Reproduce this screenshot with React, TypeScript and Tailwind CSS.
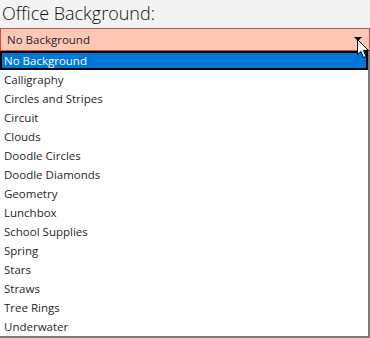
import { useState } from 'react';

const options = [
  'No Background',
  'Calligraphy',
  'Circles and Stripes',
  'Circuit',
  'Clouds',
  'Doodle Circles',
  'Doodle Diamonds',
  'Geometry',
  'Lunchbox',
  'School Supplies',
  'Spring',
  'Stars',
  'Straws',
  'Tree Rings',
  'Underwater',
];

export default function App() {
  const [selected, setSelected] = useState(0);

  return (
    <div className="relative w-[370px] h-[338px] overflow-hidden bg-[#f3f3f3] font-['Segoe_UI','Open_Sans',sans-serif] text-[#1f1f1f]">
      <div className="h-[28px] pl-[2px] pt-[1px] text-[18px] font-light leading-[24px] text-[#111]">Office Background:</div>

      <div className="relative h-[23px] w-[370px] border border-[#c0504d] bg-[#fdc9b4] pl-[6px] text-[11.5px] leading-[22px]">
        {options[selected]}
        <span className="absolute right-[7px] top-[8px] h-0 w-0 border-x-[4px] border-t-[4px] border-x-transparent border-t-black" />
      </div>

      <ul className="w-[370px] border-r-2 border-b-2 border-[#7a7a7a] bg-white text-[11.5px]">
        {options.map((name, i) => (
          <li
            key={name}
            onClick={() => setSelected(i)}
            className={
              i === selected
                ? 'h-[19px] border-2 border-black bg-[#0078d7] pl-[2px] leading-[16px] text-white'
                : 'h-[19px] pl-[4px] leading-[20px]'
            }
          >
            {name}
          </li>
        ))}
      </ul>

      {/* mouse pointer */}
      <svg className="absolute left-[357px] top-[39px]" width="13" height="20" viewBox="0 0 13 20">
        <path d="M0.5 0.5 L0.5 15.5 L4 12.5 L6.5 18.5 L9 17.5 L6.5 11.5 L11.5 11.5 Z" fill="white" stroke="black" strokeWidth="1" strokeLinejoin="miter" />
      </svg>
    </div>
  );
}
